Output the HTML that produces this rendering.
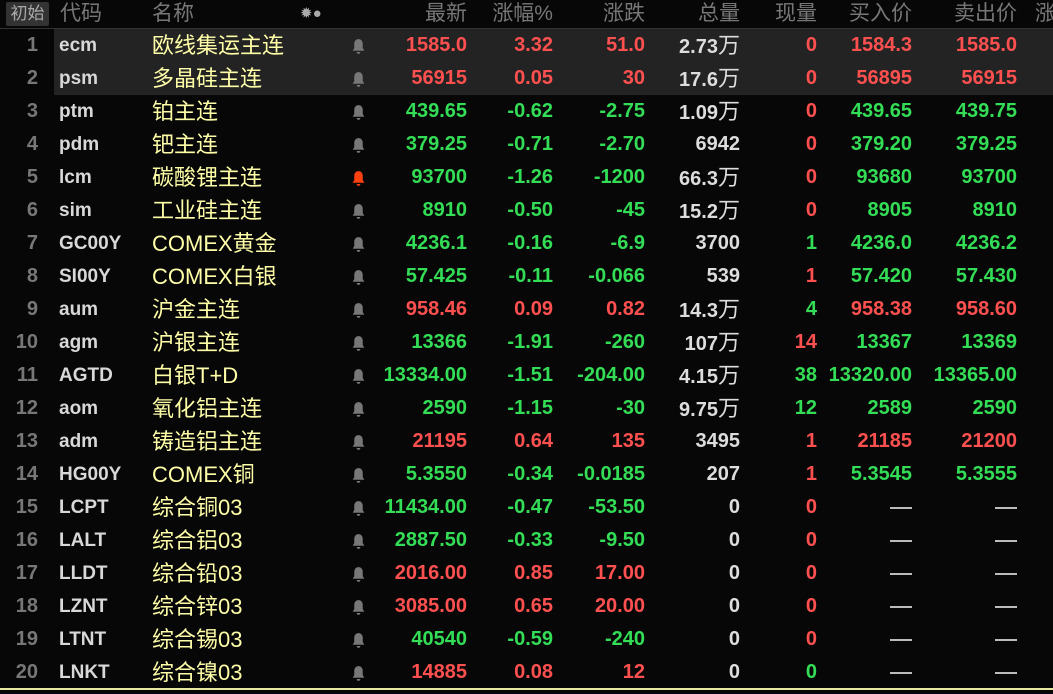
<!DOCTYPE html><html><head><meta charset="utf-8"><style>
body{margin:0;width:1053px;height:694px;background:#070707;overflow:hidden;font-family:"Liberation Sans","Noto Sans CJK SC",sans-serif;position:relative}
.h{position:absolute;top:0;left:0;width:1053px;height:28px;border-bottom:1px solid #333;color:#777;font-size:21px}
.h span{position:absolute;top:0px;line-height:28px}
.b0{position:absolute;left:6px;top:2px;width:43px;height:24px;background:#333;color:#aaa;font-size:17px;line-height:24px;text-align:center;border-radius:2px}
.r{position:absolute;left:0;width:1053px;height:33px;font-size:20px;font-weight:bold;line-height:33px}
.r span{position:absolute;top:0}
.hl{background:#232323}
.i{right:1015px;color:#777;text-align:right}
.c{left:59px;color:#d8d8d8;font-size:19px}
.n{left:152px;color:#ffffa8;font-weight:normal;font-size:22px}
.r svg{position:absolute;left:351px;top:9px}
.c1{right:586px}.c2{right:500px}.c3{right:408px}.c4{right:313px;color:#ddd}.c5{right:236px}.c6{right:141px}.c7{right:36px}
.R{color:#ff5050}.G{color:#33dd55}
.d{display:inline-block;width:22px;height:2px;background:#bbb;vertical-align:middle}
.u{font-weight:normal;font-size:22px}
</style></head><body>
<div class="h"><div class="b0">初始</div>
<span style="left:60px">代码</span><span style="left:152px">名称</span><span style="left:300px;font-size:15px;color:#aaa">✹●</span>
<span style="right:586px">最新</span><span style="right:500px">涨幅%</span><span style="right:408px">涨跌</span><span style="right:313px">总量</span><span style="right:236px">现量</span><span style="right:141px">买入价</span><span style="right:36px">卖出价</span><span style="left:1035px">涨</span></div>
<svg width="0" height="0" style="position:absolute"><defs><symbol id="bell" viewBox="0 0 14 16"><path d="M7 1c-2.7 0-4 2.2-4 4.5v4L1.5 12h11L11 9.5v-4C11 3.2 9.7 1 7 1zM5.3 13.2h3.4a1.7 1.7 0 01-3.4 0z"/></symbol></defs></svg>

<div class="r hl" style="top:29px;left:54px;width:999px"></div>
<div class="r hl" style="top:62px;left:54px;width:999px"></div>

<div class="r" style="top:29px"><span class="i">1</span><span class="c">ecm</span><span class="n">欧线集运主连</span><svg width="15" height="17" fill="#777"><use href="#bell"/></svg><span class="c1 R">1585.0</span><span class="c2 R">3.32</span><span class="c3 R">51.0</span><span class="c4">2.73<b class="u">万</b></span><span class="c5 R">0</span><span class="c6 R">1584.3</span><span class="c7 R">1585.0</span></div>
<div class="r" style="top:62px"><span class="i">2</span><span class="c">psm</span><span class="n">多晶硅主连</span><svg width="15" height="17" fill="#777"><use href="#bell"/></svg><span class="c1 R">56915</span><span class="c2 R">0.05</span><span class="c3 R">30</span><span class="c4">17.6<b class="u">万</b></span><span class="c5 R">0</span><span class="c6 R">56895</span><span class="c7 R">56915</span></div>
<div class="r" style="top:95px"><span class="i">3</span><span class="c">ptm</span><span class="n">铂主连</span><svg width="15" height="17" fill="#777"><use href="#bell"/></svg><span class="c1 G">439.65</span><span class="c2 G">-0.62</span><span class="c3 G">-2.75</span><span class="c4">1.09<b class="u">万</b></span><span class="c5 R">0</span><span class="c6 G">439.65</span><span class="c7 G">439.75</span></div>
<div class="r" style="top:128px"><span class="i">4</span><span class="c">pdm</span><span class="n">钯主连</span><svg width="15" height="17" fill="#777"><use href="#bell"/></svg><span class="c1 G">379.25</span><span class="c2 G">-0.71</span><span class="c3 G">-2.70</span><span class="c4">6942</span><span class="c5 R">0</span><span class="c6 G">379.20</span><span class="c7 G">379.25</span></div>
<div class="r" style="top:161px"><span class="i">5</span><span class="c">lcm</span><span class="n">碳酸锂主连</span><svg width="15" height="17" fill="#ff4010"><use href="#bell"/></svg><span class="c1 G">93700</span><span class="c2 G">-1.26</span><span class="c3 G">-1200</span><span class="c4">66.3<b class="u">万</b></span><span class="c5 R">0</span><span class="c6 G">93680</span><span class="c7 G">93700</span></div>
<div class="r" style="top:194px"><span class="i">6</span><span class="c">sim</span><span class="n">工业硅主连</span><svg width="15" height="17" fill="#777"><use href="#bell"/></svg><span class="c1 G">8910</span><span class="c2 G">-0.50</span><span class="c3 G">-45</span><span class="c4">15.2<b class="u">万</b></span><span class="c5 R">0</span><span class="c6 G">8905</span><span class="c7 G">8910</span></div>
<div class="r" style="top:227px"><span class="i">7</span><span class="c">GC00Y</span><span class="n">COMEX黄金</span><svg width="15" height="17" fill="#777"><use href="#bell"/></svg><span class="c1 G">4236.1</span><span class="c2 G">-0.16</span><span class="c3 G">-6.9</span><span class="c4">3700</span><span class="c5 G">1</span><span class="c6 G">4236.0</span><span class="c7 G">4236.2</span></div>
<div class="r" style="top:260px"><span class="i">8</span><span class="c">SI00Y</span><span class="n">COMEX白银</span><svg width="15" height="17" fill="#777"><use href="#bell"/></svg><span class="c1 G">57.425</span><span class="c2 G">-0.11</span><span class="c3 G">-0.066</span><span class="c4">539</span><span class="c5 R">1</span><span class="c6 G">57.420</span><span class="c7 G">57.430</span></div>
<div class="r" style="top:293px"><span class="i">9</span><span class="c">aum</span><span class="n">沪金主连</span><svg width="15" height="17" fill="#777"><use href="#bell"/></svg><span class="c1 R">958.46</span><span class="c2 R">0.09</span><span class="c3 R">0.82</span><span class="c4">14.3<b class="u">万</b></span><span class="c5 G">4</span><span class="c6 R">958.38</span><span class="c7 R">958.60</span></div>
<div class="r" style="top:326px"><span class="i">10</span><span class="c">agm</span><span class="n">沪银主连</span><svg width="15" height="17" fill="#777"><use href="#bell"/></svg><span class="c1 G">13366</span><span class="c2 G">-1.91</span><span class="c3 G">-260</span><span class="c4">107<b class="u">万</b></span><span class="c5 R">14</span><span class="c6 G">13367</span><span class="c7 G">13369</span></div>
<div class="r" style="top:359px"><span class="i">11</span><span class="c">AGTD</span><span class="n">白银T+D</span><svg width="15" height="17" fill="#777"><use href="#bell"/></svg><span class="c1 G">13334.00</span><span class="c2 G">-1.51</span><span class="c3 G">-204.00</span><span class="c4">4.15<b class="u">万</b></span><span class="c5 G">38</span><span class="c6 G">13320.00</span><span class="c7 G">13365.00</span></div>
<div class="r" style="top:392px"><span class="i">12</span><span class="c">aom</span><span class="n">氧化铝主连</span><svg width="15" height="17" fill="#777"><use href="#bell"/></svg><span class="c1 G">2590</span><span class="c2 G">-1.15</span><span class="c3 G">-30</span><span class="c4">9.75<b class="u">万</b></span><span class="c5 G">12</span><span class="c6 G">2589</span><span class="c7 G">2590</span></div>
<div class="r" style="top:425px"><span class="i">13</span><span class="c">adm</span><span class="n">铸造铝主连</span><svg width="15" height="17" fill="#777"><use href="#bell"/></svg><span class="c1 R">21195</span><span class="c2 R">0.64</span><span class="c3 R">135</span><span class="c4">3495</span><span class="c5 R">1</span><span class="c6 R">21185</span><span class="c7 R">21200</span></div>
<div class="r" style="top:458px"><span class="i">14</span><span class="c">HG00Y</span><span class="n">COMEX铜</span><svg width="15" height="17" fill="#777"><use href="#bell"/></svg><span class="c1 G">5.3550</span><span class="c2 G">-0.34</span><span class="c3 G">-0.0185</span><span class="c4">207</span><span class="c5 R">1</span><span class="c6 G">5.3545</span><span class="c7 G">5.3555</span></div>
<div class="r" style="top:491px"><span class="i">15</span><span class="c">LCPT</span><span class="n">综合铜03</span><svg width="15" height="17" fill="#777"><use href="#bell"/></svg><span class="c1 G">11434.00</span><span class="c2 G">-0.47</span><span class="c3 G">-53.50</span><span class="c4">0</span><span class="c5 R">0</span><span class="c6"><i class="d"></i></span><span class="c7"><i class="d"></i></span></div>
<div class="r" style="top:524px"><span class="i">16</span><span class="c">LALT</span><span class="n">综合铝03</span><svg width="15" height="17" fill="#777"><use href="#bell"/></svg><span class="c1 G">2887.50</span><span class="c2 G">-0.33</span><span class="c3 G">-9.50</span><span class="c4">0</span><span class="c5 R">0</span><span class="c6"><i class="d"></i></span><span class="c7"><i class="d"></i></span></div>
<div class="r" style="top:557px"><span class="i">17</span><span class="c">LLDT</span><span class="n">综合铅03</span><svg width="15" height="17" fill="#777"><use href="#bell"/></svg><span class="c1 R">2016.00</span><span class="c2 R">0.85</span><span class="c3 R">17.00</span><span class="c4">0</span><span class="c5 R">0</span><span class="c6"><i class="d"></i></span><span class="c7"><i class="d"></i></span></div>
<div class="r" style="top:590px"><span class="i">18</span><span class="c">LZNT</span><span class="n">综合锌03</span><svg width="15" height="17" fill="#777"><use href="#bell"/></svg><span class="c1 R">3085.00</span><span class="c2 R">0.65</span><span class="c3 R">20.00</span><span class="c4">0</span><span class="c5 R">0</span><span class="c6"><i class="d"></i></span><span class="c7"><i class="d"></i></span></div>
<div class="r" style="top:623px"><span class="i">19</span><span class="c">LTNT</span><span class="n">综合锡03</span><svg width="15" height="17" fill="#777"><use href="#bell"/></svg><span class="c1 G">40540</span><span class="c2 G">-0.59</span><span class="c3 G">-240</span><span class="c4">0</span><span class="c5 R">0</span><span class="c6"><i class="d"></i></span><span class="c7"><i class="d"></i></span></div>
<div class="r" style="top:656px"><span class="i">20</span><span class="c">LNKT</span><span class="n">综合镍03</span><svg width="15" height="17" fill="#777"><use href="#bell"/></svg><span class="c1 R">14885</span><span class="c2 R">0.08</span><span class="c3 R">12</span><span class="c4">0</span><span class="c5 G">0</span><span class="c6"><i class="d"></i></span><span class="c7"><i class="d"></i></span></div>
<div style="position:absolute;left:0;top:688px;width:1053px;height:2px;background:#e8e8a0"></div>
</body></html>
